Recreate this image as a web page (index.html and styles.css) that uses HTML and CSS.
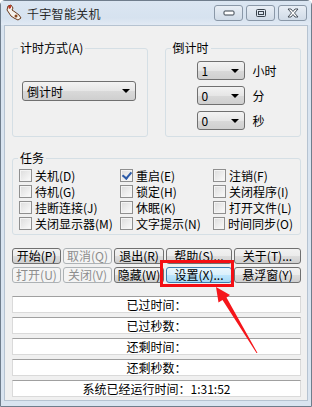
FILE: index.html
```html
<!DOCTYPE html>
<html lang="zh-CN">
<head>
    <meta charset="UTF-8">
    <title>千宇智能关机</title>
    <link rel="stylesheet" href="styles.css">
</head>
<body>

    <div class="window">
        <div class="titlebar">
            <svg class="app-icon" width="18" height="18" viewBox="0 0 18 18">
                <path d="M3 2 L6 1 L8 4 L7 6 L10 8 L14 11 L16 14 L13 16 L9 14 L6 12 L4 9 L2 6 Z" fill="#f6f2ec" stroke="#6b3a1c" stroke-width="1"/>
                <path d="M3 2 L6 1 L6 4 L4 5 Z" fill="#c0392b"/>
                <circle cx="11" cy="12" r="1.5" fill="#8a4a22"/>
            </svg>
            <span class="title">千宇智能关机</span>
            <div class="controls">
                <span class="ctl"><svg width="12" height="6" viewBox="0 0 12 6"><rect x="1" y="1" width="10" height="4" rx="1" fill="#fff" stroke="#39424c"/></svg></span>
                <span class="ctl"><svg width="12" height="10" viewBox="0 0 12 10"><rect x="1.5" y="1.5" width="9" height="7" rx="1" fill="none" stroke="#39424c"/><rect x="3.5" y="3.5" width="5" height="3" fill="none" stroke="#39424c"/></svg></span>
                <span class="ctl"><svg width="14" height="10" viewBox="0 0 14 10"><path d="M2 1 H5 L7 3.5 L9 1 H12 L8.5 5 L12 9 H9 L7 6.5 L5 9 H2 L5.5 5 Z" fill="#fff" stroke="#39424c" stroke-width="0.9"/></svg></span>
            </div>
        </div>

        <div class="client">
            <div class="top-row">
                <fieldset class="group mode">
                    <legend>计时方式(A)</legend>
                    <div class="mode-body">
                        <div class="combo wide"><span>倒计时</span><i class="arrow"></i></div>
                    </div>
                </fieldset>
                <fieldset class="group countdown">
                    <legend>倒计时</legend>
                    <div class="countdown-body">
                        <div class="spin-row"><div class="combo small"><span>1</span><i class="arrow"></i></div><span>小时</span></div>
                        <div class="spin-row"><div class="combo small"><span>0</span><i class="arrow"></i></div><span>分</span></div>
                        <div class="spin-row"><div class="combo small"><span>0</span><i class="arrow"></i></div><span>秒</span></div>
                    </div>
                </fieldset>
            </div>

            <fieldset class="group tasks">
                <legend>任务</legend>
                <div class="task-grid">
                    <label class="check"><i class="box"></i>关机(D)</label>
                    <label class="check"><i class="box checked"></i>重启(E)</label>
                    <label class="check"><i class="box"></i>注销(F)</label>
                    <label class="check"><i class="box"></i>待机(G)</label>
                    <label class="check"><i class="box"></i>锁定(H)</label>
                    <label class="check"><i class="box"></i>关闭程序(I)</label>
                    <label class="check"><i class="box"></i>挂断连接(J)</label>
                    <label class="check"><i class="box"></i>休眠(K)</label>
                    <label class="check"><i class="box"></i>打开文件(L)</label>
                    <label class="check"><i class="box"></i>关闭显示器(M)</label>
                    <label class="check"><i class="box"></i>文字提示(N)</label>
                    <label class="check"><i class="box"></i>时间同步(O)</label>
                </div>
            </fieldset>

            <div class="buttons">
                <button class="btn">开始(P)</button>
                <button class="btn" disabled>取消(Q)</button>
                <button class="btn">退出(R)</button>
                <button class="btn">帮助(S)...</button>
                <button class="btn">关于(T)...</button>
                <button class="btn" disabled>打开(U)</button>
                <button class="btn" disabled>关闭(V)</button>
                <button class="btn">隐藏(W)</button>
                <button class="btn hot">设置(X)...</button>
                <button class="btn">悬浮窗(Y)</button>
            </div>

            <div class="info">
                <div class="info-row">已过时间：</div>
                <div class="info-row">已过秒数：</div>
                <div class="info-row">还剩时间：</div>
                <div class="info-row">还剩秒数：</div>
                <div class="info-row">系统已经运行时间：1:31:52</div>
            </div>
        </div>
    </div>

    <!-- annotation overlay -->
    <div class="mark-box"></div>
    <svg class="mark-arrow" width="312" height="407" viewBox="0 0 312 407">
        <polygon points="216,287 230,295 226.5,297.5 257.5,353 256.5,353 222.5,300 218.5,302.5" fill="#f5151a"/>
    </svg>

</body>
</html>
```

FILE: styles.css
```css
body {
    margin: 0;
    background-color: #ffffff;
    font-family: "Noto Sans CJK SC", "Liberation Sans", sans-serif;
    font-size: 12px;
    color: #000;
}
.window {
    width: 312px;
    height: 407px;
    box-sizing: border-box;
    background-color: #d9e4f0;
    border: 1px solid #6f7d8c;
    border-radius: 5px 5px 0 0;
    padding: 0 3px 5px 3px;
    display: flex;
    flex-direction: column;
}
.titlebar {
    height: 24px;
    display: flex;
    align-items: center;
    background: linear-gradient(#dbe6f2, #d6e2ef 70%, #e2eaf4);
    margin: 0 -3px;
    padding: 0 4px 0 4px;
}
.app-icon {
    margin-right: 4px;
}
.title {
    font-size: 12px;
    color: #2a2a2a;
    flex: 1;
    letter-spacing: 0.3px;
}
.controls {
    display: flex;
    gap: 3px;
    align-self: flex-start;
    margin-top: 4px;
}
.ctl {
    width: 29px;
    height: 16px;
    box-sizing: border-box;
    border: 1px solid #8a98a8;
    border-radius: 3px;
    background: linear-gradient(#e8eef5, #d0dbe7);
    display: flex;
    align-items: center;
    justify-content: center;
}
.client {
    flex: 1;
    background-color: #f0f0f0;
    border: 1px solid #b6c3d1;
    padding: 15px 6px 0 7px;
}
.top-row {
    display: flex;
    gap: 17px;
}
.group {
    margin: 0;
    padding: 0;
    border: 1px solid #d5dfe5;
    border-radius: 3px;
    box-sizing: border-box;
}
.group legend {
    margin-left: 5px;
    padding: 0 2px;
    line-height: 14px;
}
.mode {
    width: 136px;
    height: 96px;
}
.mode-body {
    padding: 26px 0 0 9px;
}
.countdown {
    width: 137px;
    height: 96px;
}
.countdown-body {
    padding: 6px 0 0 31px;
    display: flex;
    flex-direction: column;
    gap: 6px;
}
.combo {
    box-sizing: border-box;
    border: 1px solid #707070;
    border-radius: 3px;
    background: linear-gradient(#f3f3f3, #e6e6e6 50%, #d9d9d9 51%, #cfcfcf);
    display: flex;
    align-items: center;
    justify-content: space-between;
    padding: 0 5px 0 4px;
}
.combo.wide {
    width: 114px;
    height: 20px;
}
.combo.small {
    width: 48px;
    height: 19px;
}
.arrow {
    width: 0;
    height: 0;
    border-left: 4px solid transparent;
    border-right: 4px solid transparent;
    border-top: 4px solid #000;
}
.spin-row {
    display: flex;
    align-items: center;
    gap: 8px;
}
.tasks {
    margin-top: 14px;
    height: 84px;
}
.task-grid {
    padding: 3px 0 0 6px;
    display: grid;
    grid-template-columns: 101px 93px 80px;
    row-gap: 1px;
}
.check {
    display: flex;
    align-items: center;
    gap: 3px;
    line-height: 15px;
    white-space: nowrap;
}
.box {
    width: 11px;
    height: 11px;
    border: 1px solid #8f8f8f;
    background: linear-gradient(135deg, #dcdcdc, #fbfbfb);
    box-shadow: inset 0 0 0 1px #f4f4f4;
    position: relative;
}
.box.checked::after {
    content: "";
    position: absolute;
    left: 3px;
    top: 0px;
    width: 4px;
    height: 7px;
    border: solid #2b5aa8;
    border-width: 0 2px 2px 0;
    transform: rotate(40deg);
}
.buttons {
    margin-top: 13px;
    display: grid;
    grid-template-columns: 49px 49px 50px 66px 67px;
    column-gap: 2px;
    row-gap: 3px;
}
.btn {
    height: 16px;
    padding: 0;
    font-family: inherit;
    font-size: 12px;
    line-height: 14px;
    color: #000;
    border: 1px solid #707070;
    border-radius: 3px;
    background: linear-gradient(#f2f2f2, #ebebeb 50%, #dddddd 51%, #cfcfcf);
}
.btn:disabled {
    color: #8d8d8d;
    border-color: #adb2b5;
    background: #f4f4f4;
}
.btn.hot {
    border-color: #3c7fb1;
    background: linear-gradient(#eaf6fd, #d9f0fc 50%, #bee6fd 51%, #a7d9f5);
}
.info {
    margin-top: 13px;
    display: flex;
    flex-direction: column;
    gap: 4px;
    width: 289px;
}
.info-row {
    height: 17px;
    box-sizing: border-box;
    background: #ffffff;
    border: 1px solid #dadada;
    border-top-color: #a0a0a0;
    text-align: center;
    line-height: 15px;
}
.mark-box {
    position: absolute;
    left: 160px;
    top: 260px;
    width: 68px;
    height: 21px;
    border: 3px solid #f40f14;
}
.mark-arrow {
    position: absolute;
    left: 0;
    top: 0;
    pointer-events: none;
}
```
